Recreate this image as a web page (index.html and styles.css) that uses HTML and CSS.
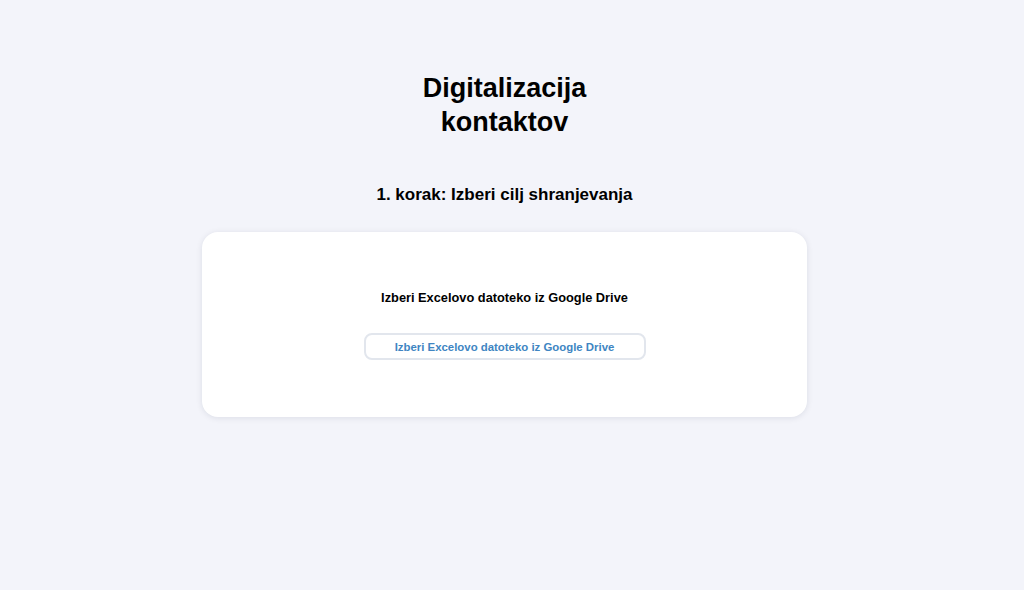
FILE: index.html
```html
<!DOCTYPE html>
<html lang="sl">
<head>
<meta charset="utf-8">
<title>Digitalizacija kontaktov</title>
<link rel="stylesheet" href="styles.css">
</head>
<body>
<main class="page">
  <h1 class="title">Digitalizacija kontaktov</h1>
  <h2 class="step">1. korak: Izberi cilj shranjevanja</h2>
  <section class="card">
    <p class="card-label">Izberi Excelovo datoteko iz Google Drive</p>
    <button class="pick-btn" type="button">Izberi Excelovo datoteko iz Google Drive</button>
  </section>
</main>
</body>
</html>
```
FILE: styles.css
```css
html, body {
  margin: 0;
  padding: 0;
}
body {
  background: #f3f4fa;
  font-family: "Liberation Sans", Arial, sans-serif;
  color: #000;
  min-height: 590px;
}
.page {
  width: 605px;
  margin-left: 202px;
  padding-top: 71px;
  display: flex;
  flex-direction: column;
  align-items: center;
}
.title {
  margin: 0;
  max-width: 220px;
  text-align: center;
  font-size: 27px;
  line-height: 34px;
  font-weight: 700;
}
.step {
  margin: 46px 0 0;
  font-size: 17px;
  line-height: 20px;
  font-weight: 700;
  text-align: center;
}
.card {
  margin-top: 27px;
  width: 100%;
  box-sizing: border-box;
  background: #ffffff;
  border-radius: 16px;
  box-shadow: 0 1px 6px rgba(20, 30, 60, 0.10);
  padding: 58px 20px 57px;
  display: flex;
  flex-direction: column;
  align-items: center;
}
.card-label {
  margin: 0;
  font-size: 12.8px;
  line-height: 16px;
  font-weight: 700;
}
.pick-btn {
  margin-top: 27px;
  width: 282px;
  height: 27px;
  box-sizing: border-box;
  background: #ffffff;
  border: 2px solid #e2e6ed;
  border-radius: 8px;
  font-family: "Liberation Sans", Arial, sans-serif;
  font-size: 11.4px;
  font-weight: 700;
  color: #4085c2;
  padding: 0;
  cursor: pointer;
}
```
